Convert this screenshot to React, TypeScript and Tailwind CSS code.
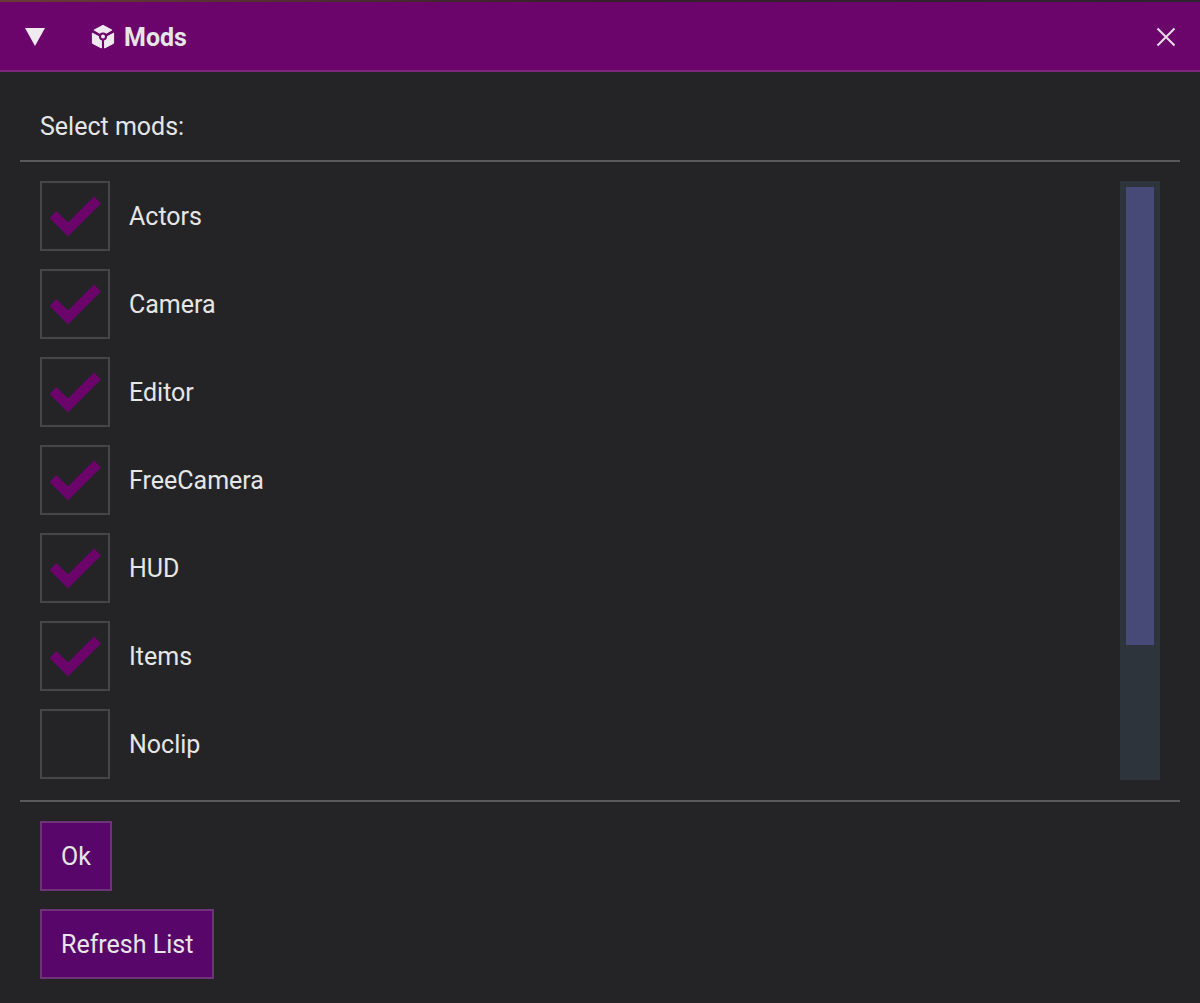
const mods = [
  { name: "Actors", enabled: true },
  { name: "Camera", enabled: true },
  { name: "Editor", enabled: true },
  { name: "FreeCamera", enabled: true },
  { name: "HUD", enabled: true },
  { name: "Items", enabled: true },
  { name: "Noclip", enabled: false },
];

function CubeIcon() {
  return (
    <svg viewBox="0 0 24 26" className="h-[26px] w-6" aria-hidden="true">
      <path d="M12 1.5 L20.5 6 L12 11 L3.5 6 Z" fill="#f0eaf0" stroke="#f0eaf0" strokeWidth="1.4" strokeLinejoin="round" />
      <path d="M1.4 9.2 L10.4 14 V24 L1.4 19.3 Z" fill="#f0eaf0" stroke="#f0eaf0" strokeWidth="1" strokeLinejoin="round" />
      <path d="M22.6 9.2 L13.6 14 V24 L22.6 19.3 Z" fill="#f0eaf0" stroke="#f0eaf0" strokeWidth="1" strokeLinejoin="round" />
      <circle cx="12" cy="12.6" r="3" fill="#f0eaf0" stroke="#6c056b" strokeWidth="2" />
    </svg>
  );
}

function ModRow({ name, enabled }: { name: string; enabled: boolean }) {
  return (
    <li>
      <label className="flex w-fit items-center gap-[19px]">
        <span className="relative block size-[70px]">
          <input
            type="checkbox"
            defaultChecked={enabled}
            className="peer block size-full appearance-none border-2 border-[#464648] bg-transparent"
          />
          <svg
            viewBox="0 0 70 70"
            className="pointer-events-none absolute inset-0 size-full opacity-0 peer-checked:opacity-100"
            aria-hidden="true"
          >
            <path d="M9.5 37 L16.5 30 L28 41.5 L54 15.5 L61 22.5 L28 55.5 Z" fill="#6c056b" />
          </svg>
        </span>
        <span className="pt-[2px]">{name}</span>
      </label>
    </li>
  );
}

export default function App() {
  return (
    <div className="min-h-screen bg-linear-to-r from-[#6b3a35] via-[#35202a] to-[#2c2430] pt-[2px] font-['Roboto',sans-serif] text-[25px] leading-[30px] text-[#e6e6e6]">
      <section className="bg-[#242426]">
        <header className="flex h-[70px] items-center border-b-2 border-[#7c297c] bg-[#6c056b] px-6 pt-[2px]">
          <button type="button" aria-label="Collapse" className="ml-px block">
            <svg viewBox="0 0 20 18" className="h-[18px] w-5" aria-hidden="true">
              <path d="M0 0 H20 L10 18 Z" fill="#f0eaf0" />
            </svg>
          </button>
          <h1 className="ml-[46px] flex flex-1 items-center gap-[9px] font-bold">
            <CubeIcon />
            <span className="pt-[2px]">Mods</span>
          </h1>
          <button type="button" aria-label="Close" className="block">
            <svg viewBox="0 0 20 20" className="size-5" aria-hidden="true">
              <path d="M1.5 1.5 L18.5 18.5 M18.5 1.5 L1.5 18.5" stroke="#e8dce8" strokeWidth="2" fill="none" />
            </svg>
          </button>
        </header>
        <div className="px-5 pb-6">
          <p className="border-b-2 border-[#59595b] px-5 pt-10 pb-[18px]">Select mods:</p>
          <div className="flex justify-between border-b-2 border-[#59595b] px-5 pt-[19px] pb-5">
            <ul className="flex flex-col gap-[18px] pb-px">
              {mods.map((mod) => (
                <ModRow key={mod.name} name={mod.name} enabled={mod.enabled} />
              ))}
            </ul>
            <div className="w-10 bg-[#2d343c] p-[6px]">
              <div className="h-[78%] bg-[#474a77]" />
            </div>
          </div>
          <div className="flex flex-col items-start gap-[18px] px-5 pt-[19px]">
            <button type="button" className="h-[70px] border-2 border-[#6f3379] bg-[#59066b] px-[19px] pt-[2px]">
              Ok
            </button>
            <button type="button" className="h-[70px] border-2 border-[#6f3379] bg-[#59066b] px-[19px] pt-[2px]">
              Refresh List
            </button>
          </div>
        </div>
      </section>
    </div>
  );
}
